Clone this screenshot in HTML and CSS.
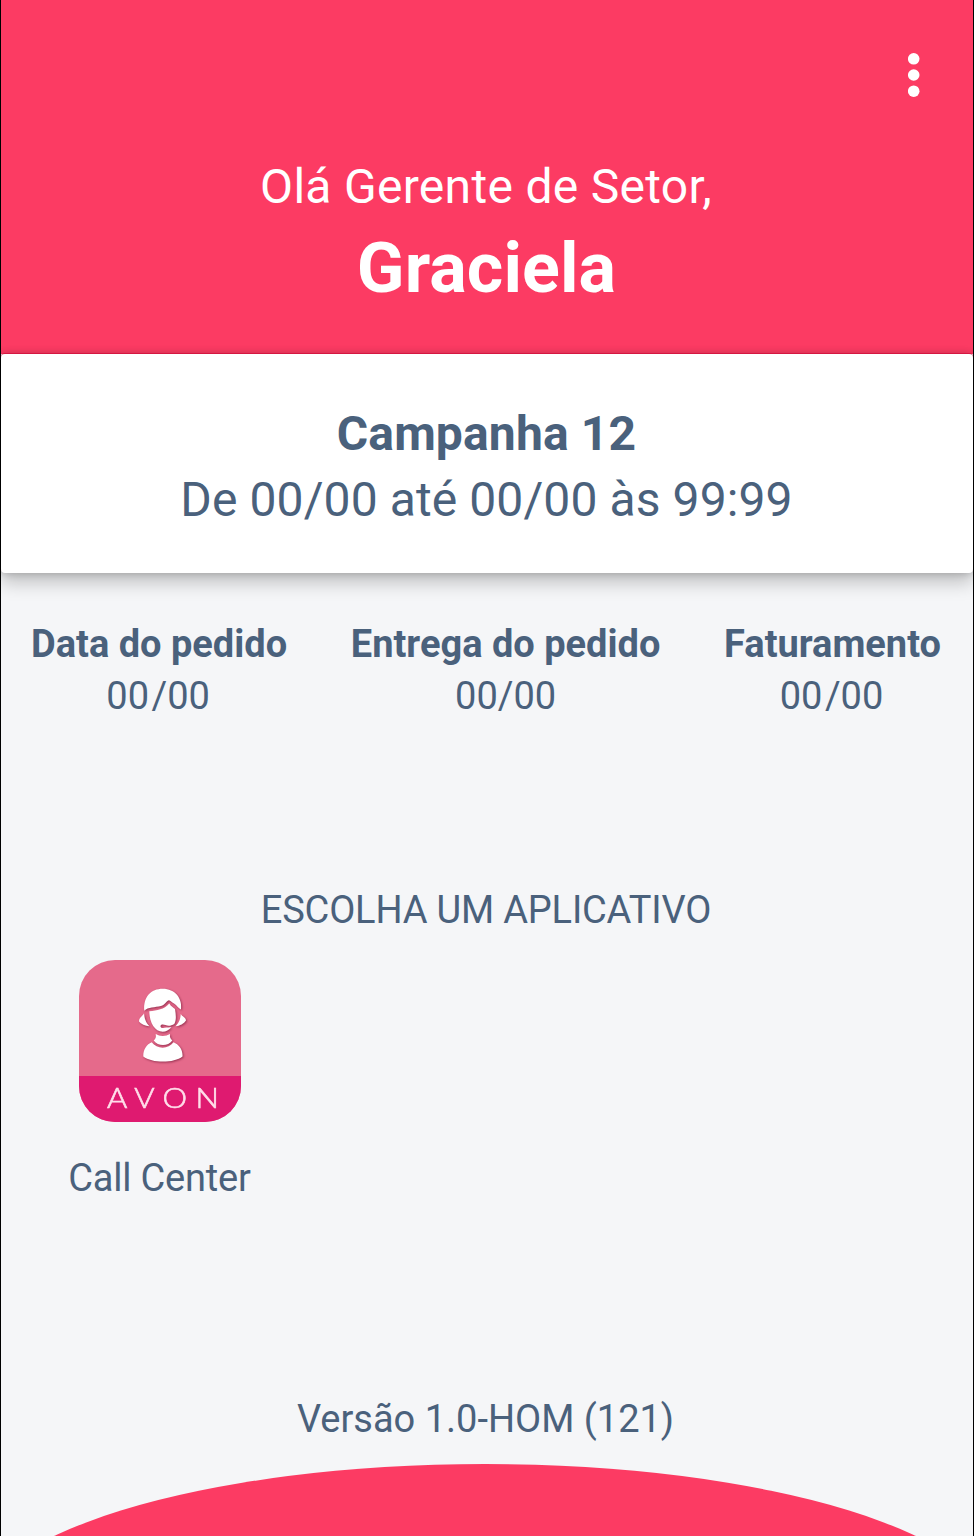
FILE: index.html
```html
<!DOCTYPE html>
<html lang="pt-BR">
<head>
<meta charset="utf-8">
<title>Campanha</title>
<link rel="stylesheet" href="styles.css">
</head>
<body>
<div class="screen">
  <header class="header">
    <button class="menu" aria-label="Menu">
      <svg width="12" height="46" viewBox="0 0 12 46" fill="#fff"><circle cx="5.700" cy="6.800" r="5.800"/><circle cx="5.700" cy="23" r="5.800"/><circle cx="5.700" cy="39.200" r="5.800"/></svg>
    </button>
    <p class="greeting">Olá Gerente de Setor,</p>
    <h1 class="name">Graciela</h1>
  </header>
  <section class="card">
    <h2 class="card-title">Campanha 12</h2>
    <p class="card-period">De 00/00 até 00/00 às 99:99</p>
  </section>
  <section class="dates">
    <div class="date date-order"><h3>Data do pedido</h3><p>0<span class="day">0</span>/00</p></div>
    <div class="date date-delivery"><h3>Entrega do pedido</h3><p>00/00</p></div>
    <div class="date date-billing"><h3>Faturamento</h3><p>0<span class="day">0</span>/00</p></div>
  </section>
  <main class="apps">
    <h2 class="apps-title">ESCOLHA UM APLICATIVO</h2>
    <a class="app">
      <span class="app-icon">
        <span class="app-art">
          <svg width="60" height="90" viewBox="0 0 60 90">
            <g class="agent" fill="#fff">
              <path d="M13.300 39.700 C12 26 20 17.700 31.700 17.700 C44 17.700 51.500 27 50 38.500 C47 37.500 46 34 43 32.500 C40.500 31.500 39.500 29.500 38 29.300 C36 29.300 34 34 30 35 C24 36.500 17 36 13.300 39.700 Z"/>
              <path d="M18.300 40.300 C26 39.500 33 38.500 38.300 32.500 C40 35.500 42.500 36.500 44 38 C45 44 45.500 49 43.300 53 C40 55 37 55.300 34.500 54 C31.500 53 29.500 53.500 29.500 55.300 C29.500 57 31.500 57.500 33.500 56.800 C36 56.300 39 56.500 40.500 56 C38 59 35 60.800 31.700 60.800 C24 60.800 18.500 52 18.300 40.300 Z"/>
              <path d="M13 42.300 C12 45 8 46.500 8 50.500 C10 53 14 55 18.500 55.200 C14.500 51.500 13.500 47 13 42.300 Z"/>
              <path d="M49.700 43 C51 45.500 55 46.500 55 49.500 C53 52.500 49 55 44.500 55.200 C48.500 51.500 49.500 47 49.700 43 Z"/>
              <path d="M24.700 63 C29 65.500 34.500 65.500 39 63 C38.500 66.500 39.800 68 41.300 69.500 C37 75.500 27 75.500 22.700 69.500 C24.500 68 25.300 66.500 24.700 63 Z"/>
              <path d="M20.700 71.300 C26 78.500 37.500 78.500 42.500 71.300 C48 73.500 52 79 51.500 85.500 C43 92.300 21 92.300 12.300 85.500 C12 79 15.500 73.500 20.700 71.300 Z"/>
            </g>
          </svg>
        </span>
        <span class="app-brand"><span class="wordmark">AVON</span></span>
      </span>
      <span class="app-label">Call Center</span>
    </a>
  </main>
  <p class="version">Versão 1.0-HOM (121)</p>
  <footer class="footer"><svg width="972" height="72" viewBox="1 0 972 72"><ellipse cx="485" cy="159" rx="515" ry="159" fill="#fc3b63"/></svg></footer>
</div>
</body>
</html>
```

FILE: styles.css
```css
* { box-sizing: border-box; margin: 0; padding: 0; }
body { background: #f5f6f8; font-family: Roboto, sans-serif; color: #4a617c; }
.screen { width: 974px; height: 1536px; overflow: hidden; border: solid #000; border-width: 0 1px; background: #f5f6f8; display: flex; flex-direction: column; }
.header { height: 354px; flex: none; background: #fc3b63; color: #fff; display: flex; flex-direction: column; align-items: center; }
.menu { align-self: flex-end; margin: 52px 53px 61px 0; width: 12px; height: 46px; border: 0; background: none; }
.menu svg { display: block; }
.greeting { font-size: 48px; line-height: 56px; white-space: nowrap; letter-spacing: .3px; padding-right: 2px; }
.name { font-size: 70px; line-height: 84px; margin-top: 11px; letter-spacing: .1px; padding-right: 1px; }
.card { height: 219px; flex: none; position: relative; background: #fff; border-radius: 4px; padding: 47px 1px 0 0; text-align: center; font-size: 48px; line-height: 66px; box-shadow: 0 -1px 0 rgba(205,0,50,.55), 0 10px 18px rgba(0,0,0,.21), 0 0 8px rgba(0,0,0,.22); }
.card-title { font-size: 48px; letter-spacing: .15px; }
.card-period { letter-spacing: .1px; }
.dates { display: flex; justify-content: space-between; padding: 45px 32px 0 30px; height: 315px; flex: none; text-align: center; font-size: 38px; line-height: 52px; }
.date h3 { font-size: 38px; }
.day { letter-spacing: 2.5px; }
.date-order p, .date-billing p { padding-right: 2px; }
.apps { height: 509px; flex: none; }
.apps-title { font-weight: 400; font-size: 38px; line-height: 44px; text-align: center; letter-spacing: -.18px; padding-right: 2px; }
.app { margin: 28px 0 0 49px; width: 220px; display: flex; flex-direction: column; align-items: center; }
.app-icon { width: 162px; height: 162px; border-radius: 36px; overflow: hidden; background: #e56a8b; display: flex; flex-direction: column; }
.app-art { height: 116px; padding: 11px 0 0 52px; }
.app-art svg { display: block; overflow: visible; }
.agent { filter: drop-shadow(1px 1px 1px rgba(110,20,50,.65)); }
.app-brand { height: 46px; background: #df1a70; padding-left: 28px; }
.wordmark { display: block; width: 100px; color: #ffdfea; font: 300 27px/43px Lato, sans-serif; letter-spacing: 7.3px; -webkit-text-stroke: .6px #ffdfea; white-space: nowrap; transform: scaleX(1.15); transform-origin: left; }
.app-label { margin-top: 34px; font-size: 38px; line-height: 44px; white-space: nowrap; letter-spacing: -.2px; padding-right: 1px; }
.version { flex: none; text-align: center; font-size: 38px; line-height: 44px; height: 67px; padding-right: 3px; }
.footer { height: 72px; flex: none; }
.footer svg { display: block; }
```
